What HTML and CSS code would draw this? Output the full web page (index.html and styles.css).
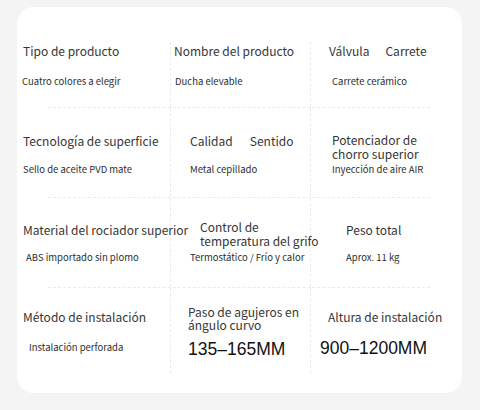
FILE: index.html
```html
<!DOCTYPE html>
<html lang="es">
<head>
<meta charset="utf-8">
<title>Especificaciones</title>
<link rel="stylesheet" href="styles.css">
</head>
<body>
<main class="sheet">
  <section class="card">
    <div class="spec-grid">
      <div class="cell r1c1">
        <div class="title">Tipo de producto</div>
        <div class="value">Cuatro colores a elegir</div>
      </div>
      <div class="cell r1c2">
        <div class="title">Nombre del producto</div>
        <div class="value">Ducha elevable</div>
      </div>
      <div class="cell r1c3 last">
        <div class="title pair"><span>Válvula</span><span>Carrete</span></div>
        <div class="value">Carrete cerámico</div>
      </div>

      <div class="rule"></div>

      <div class="cell r2c1">
        <div class="title">Tecnología de superficie</div>
        <div class="value">Sello de aceite PVD mate</div>
      </div>
      <div class="cell r2c2">
        <div class="title pair"><span>Calidad</span><span>Sentido</span></div>
        <div class="value">Metal cepillado</div>
      </div>
      <div class="cell r2c3 last">
        <div class="title">Potenciador de<br>chorro superior</div>
        <div class="value">Inyección de aire AIR</div>
      </div>

      <div class="rule"></div>

      <div class="cell r3c1">
        <div class="title">Material del rociador superior</div>
        <div class="value">ABS importado sin plomo</div>
      </div>
      <div class="cell r3c2">
        <div class="title">Control de<br>temperatura del grifo</div>
        <div class="value">Termostático / Frío y calor</div>
      </div>
      <div class="cell r3c3 last">
        <div class="title">Peso total</div>
        <div class="value">Aprox. 11 kg</div>
      </div>

      <div class="rule"></div>

      <div class="cell r4c1">
        <div class="title">Método de instalación</div>
        <div class="value">Instalación perforada</div>
      </div>
      <div class="cell r4c2">
        <div class="title tight">Paso de agujeros en<br>ángulo curvo</div>
        <div class="value num">135–165MM</div>
      </div>
      <div class="cell r4c3 last">
        <div class="title">Altura de instalación</div>
        <div class="value num">900–1200MM</div>
      </div>
    </div>
  </section>
</main>
</body>
</html>
```

FILE: styles.css
```css
* { box-sizing: border-box; }

html, body {
  margin: 0;
  padding: 0;
}

body {
  width: 480px;
  height: 410px;
  background: #f4f4f4;
  font-family: "Noto Sans CJK SC", "Noto Sans", sans-serif;
  color: #333;
  overflow: hidden;
}

.sheet {
  padding: 7px 0 0 17px;
}

.card {
  width: 445px;
  height: 386px;
  background: #ffffff;
  border-radius: 16px;
  padding-top: 35px;
}

.spec-grid {
  display: grid;
  grid-template-columns: 154px 140px 151px;
  grid-template-rows: 65px 1px 89px 1px 89px 1px 85px;
}

.cell {
  display: flex;
  flex-direction: column;
  align-items: flex-start;
  padding: var(--pt, 0) 0 0 var(--pl, 0);
  border-right: 1px dashed #ebebeb;
}

.cell.last {
  border-right: none;
}

.rule {
  grid-column: 1 / -1;
  margin: 0 32px 0 31px;
  border-top: 1px dashed #ebebeb;
  height: 0;
}

.title {
  font-size: 12px;
  line-height: 14px;
  color: #363636;
  white-space: nowrap;
}

.title.tight {
  line-height: 12.6px;
}

.pair {
  display: flex;
  gap: 16px;
}

.value {
  font-size: 9.5px;
  line-height: 12px;
  color: #2e2e2e;
  white-space: nowrap;
  margin-top: var(--vg, 16px);
  margin-left: var(--vx, 0);
}

.value.num {
  font-family: "Liberation Sans", Arial, sans-serif;
  font-size: 17.5px;
  line-height: 19px;
  color: #111;
}

/* row 1 */
.r1c1 { --pl: 6px;  --pt: 2px; --vx: -1px; --vg: 17px; }
.r1c2 { --pl: 3px;  --pt: 2px; --vx: 1px;  --vg: 17px; }
.r1c3 { --pl: 18px; --pt: 2px; --vx: 3px;  --vg: 17px; }

/* row 2 */
.r2c1 { --pl: 6px;  --pt: 26px; --vx: 0;   --vg: 15px; }
.r2c2 { --pl: 19px; --pt: 26px; --vx: 0;   --vg: 15px; }
.r2c2 .pair { gap: 17px; }
.r2c3 { --pl: 21px; --pt: 25px; --vx: 0;   --vg: 2px; }

/* row 3 */
.r3c1 { --pl: 6px;  --pt: 25px; --vx: 3px;   --vg: 14px; }
.r3c2 { --pl: 29px; --pt: 22px; --vx: -10px; --vg: 3px; }
.r3c3 { --pl: 35px; --pt: 25px; --vx: 0;     --vg: 14px; }

/* row 4 */
.r4c1 { --pl: 6px;  --pt: 22px; --vx: 6px;  --vg: 17px; }
.r4c2 { --pl: 17px; --pt: 18px; --vx: 0;    --vg: 9px; }
.r4c3 { --pl: 17px; --pt: 22px; --vx: -8px; --vg: 15px; }
```
